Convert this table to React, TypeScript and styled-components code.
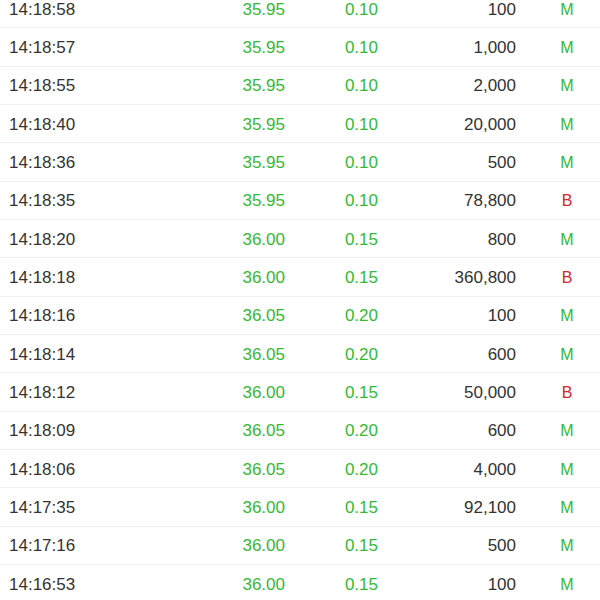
import React from "react";
import styled, { createGlobalStyle } from "styled-components";

const Global = createGlobalStyle`
  html, body { margin: 0; padding: 0; background: #fff; overflow: hidden; }
  body { font-family: "Liberation Sans", Arial, sans-serif; }
`;

const List = styled.div`
  margin-top: -10px;
  width: 600px;
`;

const Row = styled.div`
  display: grid;
  grid-template-columns: 9px 140px 136px 93px 138px 102px 1fr;
  align-items: center;
  height: 38.33px;
  padding-top: 2px;
  box-sizing: border-box;
  border-bottom: 1px solid #f0f0f0;
  font-size: 17px;
`;

const Time = styled.div`
  grid-column: 2;
  color: #333;
`;

const Num = styled.div<{ $green?: boolean }>`
  text-align: right;
  color: ${(p) => (p.$green ? "#35b935" : "#333")};
`;

const Flag = styled.div<{ $kind: "M" | "B" }>`
  text-align: center;
  font-size: 16px;
  color: ${(p) => (p.$kind === "M" ? "#35b935" : "#d2282c")};
`;

type T = [string, string, string, string, "M" | "B"];
const data: T[] = [
  ["14:18:58", "35.95", "0.10", "100", "M"],
  ["14:18:57", "35.95", "0.10", "1,000", "M"],
  ["14:18:55", "35.95", "0.10", "2,000", "M"],
  ["14:18:40", "35.95", "0.10", "20,000", "M"],
  ["14:18:36", "35.95", "0.10", "500", "M"],
  ["14:18:35", "35.95", "0.10", "78,800", "B"],
  ["14:18:20", "36.00", "0.15", "800", "M"],
  ["14:18:18", "36.00", "0.15", "360,800", "B"],
  ["14:18:16", "36.05", "0.20", "100", "M"],
  ["14:18:14", "36.05", "0.20", "600", "M"],
  ["14:18:12", "36.00", "0.15", "50,000", "B"],
  ["14:18:09", "36.05", "0.20", "600", "M"],
  ["14:18:06", "36.05", "0.20", "4,000", "M"],
  ["14:17:35", "36.00", "0.15", "92,100", "M"],
  ["14:17:16", "36.00", "0.15", "500", "M"],
  ["14:16:53", "36.00", "0.15", "100", "M"],
];

export default function App() {
  return (
    <>
      <Global />
      <List>
        {data.map(([t, p, c, v, f]) => (
          <Row key={t}>
            <Time>{t}</Time>
            <Num $green>{p}</Num>
            <Num $green>{c}</Num>
            <Num>{v}</Num>
            <Flag $kind={f}>{f}</Flag>
          </Row>
        ))}
      </List>
    </>
  );
}
